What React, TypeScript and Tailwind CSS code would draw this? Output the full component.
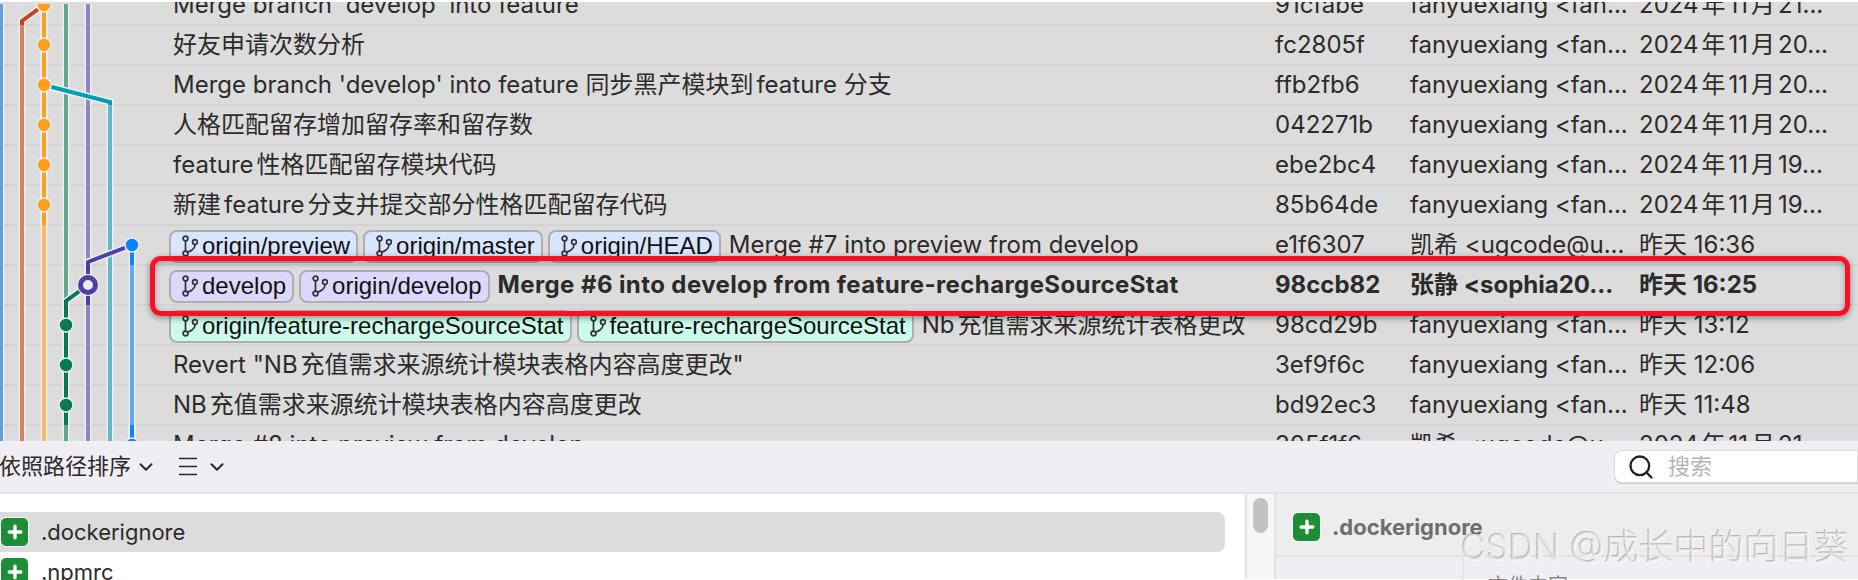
import React from 'react';
import { ChevronDown, Plus, Search } from 'lucide-react';

interface Commit {
  subject: string;
  sha: string;
  author: string;
  date: string;
  tags?: { name: string; color: 'blue' | 'purple' | 'green' }[];
  bold?: boolean;
}

const fan = 'fanyuexiang <fan...';

const commits: Commit[] = [
  { subject: "Merge branch 'develop' into feature", sha: '91cfabe', author: fan, date: '2024年11月21...' },
  { subject: '好友申请次数分析', sha: 'fc2805f', author: fan, date: '2024年11月20...' },
  { subject: "Merge branch 'develop' into feature 同步黑产模块到feature 分支", sha: 'ffb2fb6', author: fan, date: '2024年11月20...' },
  { subject: '人格匹配留存增加留存率和留存数', sha: '042271b', author: fan, date: '2024年11月20...' },
  { subject: 'feature性格匹配留存模块代码', sha: 'ebe2bc4', author: fan, date: '2024年11月19...' },
  { subject: '新建feature分支并提交部分性格匹配留存代码', sha: '85b64de', author: fan, date: '2024年11月19...' },
  {
    subject: 'Merge #7 into preview from develop',
    sha: 'e1f6307',
    author: '凯希 <ugcode@u...',
    date: '昨天 16:36',
    tags: [
      { name: 'origin/preview', color: 'blue' },
      { name: 'origin/master', color: 'blue' },
      { name: 'origin/HEAD', color: 'blue' },
    ],
  },
  {
    subject: 'Merge #6 into develop from feature-rechargeSourceStat',
    sha: '98ccb82',
    author: '张静 <sophia20...',
    date: '昨天 16:25',
    bold: true,
    tags: [
      { name: 'develop', color: 'purple' },
      { name: 'origin/develop', color: 'purple' },
    ],
  },
  {
    subject: 'Nb充值需求来源统计表格更改',
    sha: '98cd29b',
    author: fan,
    date: '昨天 13:12',
    tags: [
      { name: 'origin/feature-rechargeSourceStat', color: 'green' },
      { name: 'feature-rechargeSourceStat', color: 'green' },
    ],
  },
  { subject: 'Revert "NB充值需求来源统计模块表格内容高度更改"', sha: '3ef9f6c', author: fan, date: '昨天 12:06' },
  { subject: 'NB充值需求来源统计模块表格内容高度更改', sha: 'bd92ec3', author: fan, date: '昨天 11:48' },
  { subject: 'Merge #8 into preview from develop', sha: '305f1f6', author: '凯希 <ugcode@u...', date: '2024年11月21...' },
];

const tagColors = {
  blue: 'bg-[#d6e6ff]',
  purple: 'bg-[#dcd8fc]',
  green: 'bg-[#ccfbea]',
};

const BranchIcon = () => (
  <svg width="16" height="22" viewBox="0 0 16 22" fill="none" stroke="#333" strokeWidth="1.7" className="shrink-0">
    <circle cx="3.5" cy="3.5" r="2.4" />
    <circle cx="3.5" cy="18.5" r="2.4" />
    <circle cx="13" cy="7" r="2.4" />
    <path d="M3.5 6v10M13 9.5c0 4-4 6.5-7.2 7.6" />
  </svg>
);

const Tag = ({ name, color }: { name: string; color: 'blue' | 'purple' | 'green' }) => (
  <div className={`mt-[2px] flex h-[33px] shrink-0 items-center gap-[4px] rounded-lg border-2 border-[#aeaeae] pl-[11px] pr-[6px] font-['Liberation_Sans',sans-serif] text-[24px] font-normal text-[#111] ${tagColors[color]}`}>
    <BranchIcon />
    <span>{name}</span>
  </div>
);

const PALE = { red: '#d6805f', orange: '#f9b96b', green: '#62a78f', purple: '#8e86c2', teal: '#5fb9c8', blue: '#62a9f6' };

// pale through-lines and the solid stretches near commits
const pale: [string, string][] = [
  ['M1 4V441', '#639fdc'],
  ['M22 21V441', PALE.red],
  ['M44 4V441', PALE.orange],
  ['M66 4V441', PALE.green],
  ['M88 4V441', PALE.purple],
  ['M110 105V441', PALE.teal],
  ['M132 265V441', PALE.blue],
];

const solid: [string, string][] = [
  ['M44 5L22 21V25', '#c9421c'],
  ['M44 4V225', '#ff9d1f'],
  ['M44 85L110 102V105', '#00a0b4'],
  ['M132 245L88 262V305', '#4d3fa6'],
  ['M88 285L66 301V425', '#037a55'],
  ['M132 245V265', '#0a84ff'],
  ['M132 425V441', '#0a84ff'],
];

const nodes: [number, number, string][] = [
  [44, 5, '#ff9d1f'],
  [44, 45, '#ff9d1f'],
  [44, 85, '#ff9d1f'],
  [44, 125, '#ff9d1f'],
  [44, 165, '#ff9d1f'],
  [44, 205, '#ff9d1f'],
  [132, 245, '#0a84ff'],
  [66, 325, '#037a55'],
  [66, 365, '#037a55'],
  [66, 405, '#037a55'],
  [132, 445, '#0a84ff'],
];

const Graph = () => (
  <svg className="absolute left-0 top-[4px]" width="160" height="437" viewBox="0 4 160 437" fill="none">
    {pale.map(([d], i) => (
      <path key={i} d={d} stroke="#eeeeee" strokeWidth="7" />
    ))}
    {pale.map(([d, c], i) => (
      <path key={i} d={d} stroke={c} strokeWidth="4" />
    ))}
    {solid.map(([d], i) => (
      <path key={i} d={d} stroke="#eeeeee" strokeWidth="7" />
    ))}
    {solid.map(([d, c], i) => (
      <path key={i} d={d} stroke={c} strokeWidth="4" />
    ))}
    {nodes.map(([x, y, c], i) => (
      <circle key={i} cx={x} cy={y} r="7" fill={c} stroke="#eeeeee" strokeWidth="1.5" />
    ))}
    <circle cx="88" cy="285" r="11" fill="#eeeeee" />
    <circle cx="88" cy="285" r="7.5" fill="#ececec" stroke="#4d3fa6" strokeWidth="5" />
  </svg>
);

const CommitRow = ({ c }: { c: Commit }) => (
  <div className={`flex h-[40px] items-center border-b-2 border-[#d3d3d3] text-[#2b2b2b] ${c.bold ? 'font-bold' : ''}`}>
    <div className={`flex w-[1275px] shrink-0 items-center gap-[5px] whitespace-nowrap ${c.tags ? 'pl-[169px]' : 'pl-[173px]'}`}>
      {c.tags?.map((t) => <Tag key={t.name} name={t.name} color={t.color} />)}
      <span className={`${c.tags ? 'ml-[3px]' : ''} ${c.bold ? 'tracking-[0.4px]' : ''}`}>{c.subject}</span>
    </div>
    <div className="w-[135px] shrink-0">{c.sha}</div>
    <div className="w-[229px] shrink-0 whitespace-nowrap">{c.author}</div>
    <div className="whitespace-nowrap">{c.date}</div>
  </div>
);

const AddedIcon = () => (
  <div className="flex h-[30px] w-[29px] shrink-0 items-center justify-center rounded-[6px] border border-white bg-[#1d8d38]">
    <Plus size={20} strokeWidth={4} color="#ffffff" />
  </div>
);

export default function App() {
  return (
    <div className="relative h-[580px] w-[1858px] overflow-hidden bg-white font-[Inter,'Noto_Sans_CJK_SC',sans-serif] text-[24px] [text-autospace:normal]">
      {/* commit list */}
      <div className="relative mt-[2px] h-[439px] overflow-hidden bg-[#dcdcdc]">
        <div className="-mt-[16px]">
          {commits.map((c) => (
            <CommitRow key={c.sha} c={c} />
          ))}
        </div>
      </div>
      <Graph />

      {/* toolbar */}
      <div className="flex h-[53px] items-center justify-between border-b-2 border-[#e5e3e8] bg-[#f0edf3] text-[#2b2b2b]">
        <div className="flex items-center text-[22px]">
          <span className="-ml-[1px]">依照路径排序</span>
          <ChevronDown size={22} strokeWidth={2.2} className="ml-[4px]" />
          <svg width="18" height="19" viewBox="0 0 18 19" stroke="#2b2b2b" strokeWidth="1.6" className="ml-[22px]">
            <path d="M0 1.5H18M0 9.5H18M0 17.5H18" />
          </svg>
          <ChevronDown size={22} strokeWidth={2.2} className="ml-[9px]" />
        </div>
        <div className="flex h-[33px] w-[244px] items-center rounded-l-lg border border-[#dcdcdc] bg-white pl-[12px] text-[22px] text-[#b5b5b5] shadow-[0_1px_1px_rgba(0,0,0,0.15)]">
          <Search size={28} strokeWidth={2} color="#222222" />
          <span className="ml-[13px]">搜索</span>
        </div>
      </div>

      {/* files + detail */}
      <div className="flex h-[85px]">
        <div className="w-[1245px] shrink-0 pr-[20px] pt-[18px] text-[22px] text-[#2b2b2b]">
          <div className="flex h-[40px] items-center gap-[12px] rounded-r-lg bg-[#dcdcdc]">
            <AddedIcon />
            <span>.dockerignore</span>
          </div>
          <div className="flex h-[40px] items-center gap-[12px]">
            <AddedIcon />
            <span>.npmrc</span>
          </div>
        </div>
        <div className="flex w-[31px] shrink-0 justify-center border-x-2 border-[#e4e4e4] bg-[#f6f6f6] pt-[4px]">
          <div className="h-[35px] w-[15px] rounded-full bg-[#c2c2c2]" />
        </div>
        <div className="flex-1 bg-[#f0edf3]">
          <div className="flex h-[63px] items-start gap-[11px] border-b-2 border-[#e2e2e2] bg-[#ededed] pl-[16px] pt-[18px]">
            <AddedIcon />
            <span className="text-[22px] font-bold leading-[30px] text-[#6e6e6e]">.dockerignore</span>
          </div>
          <div className="ml-[186px] h-full border-l-2 border-[#e6e4e9] pl-[24px] pt-[14px] text-[20px] text-[#8a8a8a]">文件内容</div>
        </div>
      </div>

      {/* highlight box drawn over the screenshot */}
      <div className="absolute left-[150px] top-[256px] h-[60px] w-[1700px] rounded-[11px] border-[5px] border-[#fb0f24] shadow-[0_2px_6px_rgba(0,0,0,0.4),inset_0_2px_6px_rgba(0,0,0,0.3)]" />

      {/* watermark */}
      <div className="absolute left-[1461px] top-[524px] whitespace-nowrap text-[35px] font-light leading-[46px] text-[rgba(232,232,232,0.8)] [text-shadow:-1px_-1px_0_rgba(130,130,130,0.5),1px_1px_0_rgba(255,255,255,0.6)]">
        CSDN @成长中的向日葵
      </div>
    </div>
  );
}
